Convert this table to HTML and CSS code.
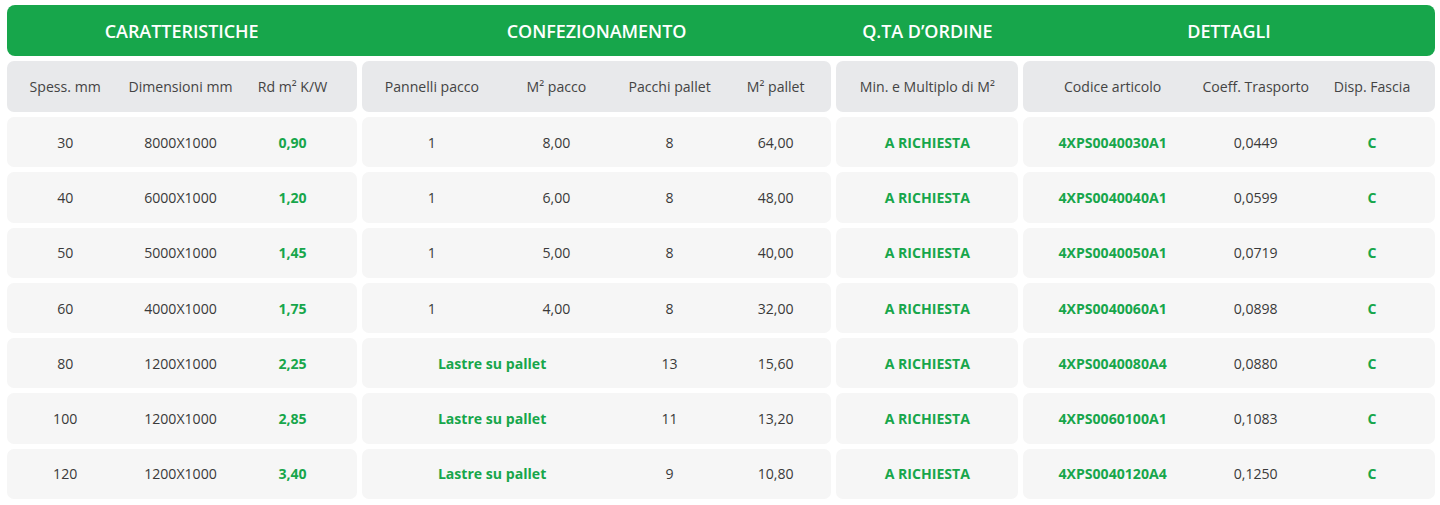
FILE: index.html
```html
<!DOCTYPE html>
<html lang="it">
<head>
<meta charset="utf-8">
<title>Tabella XPS</title>
<link rel="stylesheet" href="styles.css">
</head>
<body>
<div class="table">
  <div class="head">
    <div class="title g1">CARATTERISTICHE</div>
    <div class="title g2">CONFEZIONAMENTO</div>
    <div class="title g3">Q.TA D’ORDINE</div>
    <div class="title g4">DETTAGLI</div>
  </div>

  <div class="row sub">
    <div class="grp g1"><span>Spess. mm</span><span>Dimensioni mm</span><span>Rd m² K/W</span></div>
    <div class="grp g2"><span>Pannelli pacco</span><span>M² pacco</span><span>Pacchi pallet</span><span>M² pallet</span></div>
    <div class="grp g3"><span>Min. e Multiplo di M²</span></div>
    <div class="grp g4"><span>Codice articolo</span><span>Coeff. Trasporto</span><span>Disp. Fascia</span></div>
  </div>

  <div class="row">
    <div class="grp g1"><span>30</span><span>8000X1000</span><span class="hl">0,90</span></div>
    <div class="grp g2"><span>1</span><span>8,00</span><span>8</span><span>64,00</span></div>
    <div class="grp g3"><span class="hl">A RICHIESTA</span></div>
    <div class="grp g4"><span class="hl">4XPS0040030A1</span><span>0,0449</span><span class="hl">C</span></div>
  </div>
  <div class="row">
    <div class="grp g1"><span>40</span><span>6000X1000</span><span class="hl">1,20</span></div>
    <div class="grp g2"><span>1</span><span>6,00</span><span>8</span><span>48,00</span></div>
    <div class="grp g3"><span class="hl">A RICHIESTA</span></div>
    <div class="grp g4"><span class="hl">4XPS0040040A1</span><span>0,0599</span><span class="hl">C</span></div>
  </div>
  <div class="row">
    <div class="grp g1"><span>50</span><span>5000X1000</span><span class="hl">1,45</span></div>
    <div class="grp g2"><span>1</span><span>5,00</span><span>8</span><span>40,00</span></div>
    <div class="grp g3"><span class="hl">A RICHIESTA</span></div>
    <div class="grp g4"><span class="hl">4XPS0040050A1</span><span>0,0719</span><span class="hl">C</span></div>
  </div>
  <div class="row">
    <div class="grp g1"><span>60</span><span>4000X1000</span><span class="hl">1,75</span></div>
    <div class="grp g2"><span>1</span><span>4,00</span><span>8</span><span>32,00</span></div>
    <div class="grp g3"><span class="hl">A RICHIESTA</span></div>
    <div class="grp g4"><span class="hl">4XPS0040060A1</span><span>0,0898</span><span class="hl">C</span></div>
  </div>
  <div class="row">
    <div class="grp g1"><span>80</span><span>1200X1000</span><span class="hl">2,25</span></div>
    <div class="grp g2"><span class="hl span2">Lastre su pallet</span><span>13</span><span>15,60</span></div>
    <div class="grp g3"><span class="hl">A RICHIESTA</span></div>
    <div class="grp g4"><span class="hl">4XPS0040080A4</span><span>0,0880</span><span class="hl">C</span></div>
  </div>
  <div class="row">
    <div class="grp g1"><span>100</span><span>1200X1000</span><span class="hl">2,85</span></div>
    <div class="grp g2"><span class="hl span2">Lastre su pallet</span><span>11</span><span>13,20</span></div>
    <div class="grp g3"><span class="hl">A RICHIESTA</span></div>
    <div class="grp g4"><span class="hl">4XPS0060100A1</span><span>0,1083</span><span class="hl">C</span></div>
  </div>
  <div class="row">
    <div class="grp g1"><span>120</span><span>1200X1000</span><span class="hl">3,40</span></div>
    <div class="grp g2"><span class="hl span2">Lastre su pallet</span><span>9</span><span>10,80</span></div>
    <div class="grp g3"><span class="hl">A RICHIESTA</span></div>
    <div class="grp g4"><span class="hl">4XPS0040120A4</span><span>0,1250</span><span class="hl">C</span></div>
  </div>
</div>
</body>
</html>
```

FILE: styles.css
```css
* { box-sizing: border-box; }

html, body {
  margin: 0;
  padding: 0;
  background: #ffffff;
}

body {
  font-family: "Open Sans", "Liberation Sans", sans-serif;
  font-size: 14.1px;
  color: #3a3a3a;
}

.table {
  width: 1428px;
  margin: 5px 0 0 6.7px;
  display: flex;
  flex-direction: column;
  gap: 5px;
}

.head {
  height: 51px;
  background: #17a64b;
  border-radius: 8px;
  display: flex;
  gap: 5px;
  align-items: center;
}

.title {
  color: #ffffff;
  font-weight: 600;
  font-size: 18px;
  text-align: center;
  letter-spacing: -0.05px;
}

.g1 { width: 350px; }
.g2 { width: 470px; }
.g3 { width: 181.7px; }
.g4 { width: 411.6px; }

.row {
  display: flex;
  gap: 5px;
  height: 50.3px;
}

.row.sub {
  height: 51px;
  color: #444444;
}

.grp {
  display: grid;
  align-items: center;
  background: #f6f6f6;
  border-radius: 7px;
  height: 100%;
}

.sub .grp { background: #e8e9eb; }

.grp span {
  text-align: center;
  white-space: nowrap;
}

.grp.g1 {
  grid-template-columns: 117px 113.6px 110.4px;
}

.grp.g2 {
  grid-template-columns: 140.6px 108.4px 118px 94.2px;
}

.grp.g3 {
  grid-template-columns: 1fr;
}

.grp.g4 {
  grid-template-columns: 179px 107.2px 125.4px;
}

.span2 {
  grid-column: span 2;
  padding-left: 12px;
}

.hl {
  color: #17a64b;
  font-weight: 700;
}
```
